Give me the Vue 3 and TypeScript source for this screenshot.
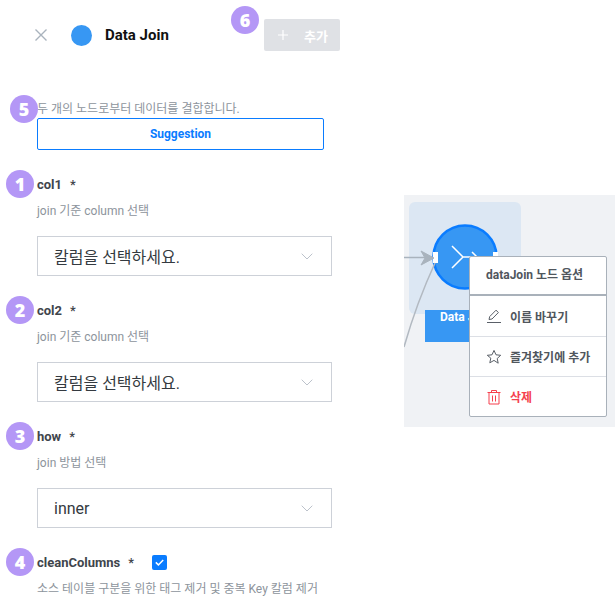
<script setup lang="ts">
interface Field {
  id: number;
  name: string;
  help: string;
  value: string;
}

const fields: Field[] = [
  { id: 1, name: "col1", help: "join 기준 column 선택", value: "칼럼을 선택하세요." },
  { id: 2, name: "col2", help: "join 기준 column 선택", value: "칼럼을 선택하세요." },
  { id: 3, name: "how", help: "join 방법 선택", value: "inner" },
];
</script>

<template>
  <div class="page">
    <section class="form">
      <header class="head">
        <svg class="close" width="12" height="12" viewBox="0 0 12 12" aria-hidden="true">
          <path d="M.5.5l11 11M11.500.5l-11 11" fill="none" stroke="#a9b3bd" stroke-width="1.4" />
        </svg>
        <span class="dot"></span>
        <h1 class="title">Data Join</h1>
        <div class="add-wrap">
          <span class="badge badge--six">6</span>
          <button class="add" type="button">
            <svg width="10" height="10" viewBox="0 0 10 10" aria-hidden="true">
              <path d="M5 0v10M0 5h10" stroke="#fff" stroke-width="1.2" />
            </svg>
            <span>추가</span>
          </button>
        </div>
      </header>

      <div class="intro">
        <span class="badge badge--five">5</span>
        <p class="intro-text">두 개의 노드로부터 데이터를 결합합니다.</p>
        <button class="suggest" type="button">Suggestion</button>
      </div>

      <div v-for="field in fields" :key="field.id" class="field">
        <div class="label">
          <span class="badge badge--field">{{ field.id }}</span>
          <span class="name">{{ field.name }}</span>
          <span class="req">*</span>
        </div>
        <p class="help">{{ field.help }}</p>
        <div class="select">
          <span>{{ field.value }}</span>
          <svg width="12" height="7" viewBox="0 0 12 7" aria-hidden="true">
            <path d="M.7.7L6 6l5.3-5.3" fill="none" stroke="#bcc2cb" stroke-width="1" />
          </svg>
        </div>
      </div>

      <div class="field field--check">
        <div class="label">
          <span class="badge badge--field">4</span>
          <span class="name">cleanColumns</span>
          <span class="req">*</span>
          <span class="check">
            <svg width="9" height="7" viewBox="0 0 9 7" aria-hidden="true">
              <path d="M.8 3.4l2.600 2.500L8.200.9" fill="none" stroke="#fff" stroke-width="1.5" />
            </svg>
          </span>
        </div>
        <p class="help help--wide">소스 테이블 구분을 위한 태그 제거 및 중복 Key 칼럼 제거</p>
      </div>
    </section>

    <aside class="canvas">
      <div class="node-bg"></div>
      <div class="node-label">Data Join</div>
      <svg class="wires" width="211" height="232" viewBox="0 0 211 232" aria-hidden="true">
        <circle cx="61" cy="62" r="31.500" fill="#3797f3" stroke="#0a7cff" stroke-width="2.500" />
        <path d="M48 51L59 62L48 73M59 62H76M68 57L74 63" fill="none" stroke="#fff" stroke-width="1.500" />
        <rect x="29" y="57" width="5" height="11" fill="#fff" />
        <rect x="89" y="57" width="5" height="11" fill="#fff" />
        <path d="M0 62.500H28" fill="none" stroke="#a9b3bd" stroke-width="1.500" />
        <path d="M0 152C8 124 19 94 31 68" fill="none" stroke="#b2b9c1" stroke-width="1.500" />
        <path d="M17 56L30 63L17 70L21 63Z" fill="#a9b3bd" stroke="#a9b3bd" stroke-width="1" />
      </svg>
      <div class="menu">
        <div class="menu-title">dataJoin 노드 옵션</div>
        <div class="menu-item">
          <svg width="16" height="16" viewBox="0 0 16 16" aria-hidden="true">
            <path d="M3 11.500L3.700 8.600L10 2.200L12.400 4.500L6 11L3 11.500Z" fill="none" stroke="#5a6068" />
            <path d="M1 14.500H15" stroke="#5a6068" />
          </svg>
          <span>이름 바꾸기</span>
        </div>
        <div class="menu-item">
          <svg width="16" height="16" viewBox="0 0 16 16" aria-hidden="true">
            <path d="M8 1.400l2 4.400 4.700.5-3.500 3.200 1 4.700L8 11.400l-4.200 2.400 1-4.700L1.300 6.300 6 5.800z" fill="none" stroke="#5a6068" />
          </svg>
          <span>즐겨찾기에 추가</span>
        </div>
        <div class="menu-item menu-item--danger">
          <svg width="16" height="16" viewBox="0 0 16 16" aria-hidden="true">
            <path d="M1.500 3.500H14.500M5.500 3V1.500H10.500V3M3 3.500V15H13V3.500M6.500 6.500V12.500M9.500 6.500V12.500" fill="none" stroke="#f5414e" />
          </svg>
          <span>삭제</span>
        </div>
      </div>
    </aside>
  </div>
</template>

<style scoped>
.page {
  position: relative;
  display: flex;
  width: 615px;
  height: 609px;
  overflow: hidden;
  background: #fff;
  font-family: Roboto, "Noto Sans CJK KR", sans-serif;
}

.form {
  flex: 0 0 auto;
  width: 295px;
  margin-left: 37px;
}

.head {
  display: flex;
  align-items: center;
  height: 32px;
  margin-top: 19px;
}

.close {
  margin-left: -2px;
}

.dot {
  width: 21px;
  height: 21px;
  margin-left: 24px;
  border-radius: 50%;
  background: #3797f3;
}

.title {
  margin: 0 0 0 13px;
  font-size: 15px;
  font-weight: 700;
  color: #111;
}

.add-wrap {
  position: relative;
  margin-left: auto;
  margin-right: -8px;
}

.add {
  display: flex;
  align-items: center;
  gap: 16px;
  width: 76px;
  height: 32px;
  padding: 0 0 0 14px;
  border: 0;
  border-radius: 2px;
  background: #dfe1e5;
  color: #fff;
  font: 700 13px Roboto, "Noto Sans CJK KR", sans-serif;
}

.badge {
  position: absolute;
  display: flex;
  align-items: center;
  justify-content: center;
  width: 28px;
  height: 28px;
  border-radius: 50%;
  background: #b497f6;
  color: #fff;
  font-family: "Open Sans", sans-serif;
  font-size: 18px;
  font-weight: 800;
}

.badge--six {
  top: -13px;
  left: -33px;
}

.badge--five {
  top: -5px;
  left: -27px;
}

.badge--field {
  top: -7px;
  left: -31px;
}

.intro {
  position: relative;
  margin-top: 49px;
}

.intro-text {
  margin: 0;
  height: 18px;
  font-size: 12px;
  line-height: 18px;
  color: #8d949c;
}

.suggest {
  display: block;
  width: 287px;
  height: 32px;
  padding: 0;
  border: 1px solid #0a7cff;
  border-radius: 2px;
  background: #fff;
  color: #0a7cff;
  font: 700 12px Roboto, sans-serif;
}

.field {
  height: 126px;
}

.intro + .field {
  margin-top: 27px;
}

.label {
  position: relative;
  display: flex;
  align-items: center;
  height: 14px;
  font-size: 13px;
  font-weight: 700;
  color: #3f454c;
}

.req {
  margin-left: 8px;
  font-weight: 500;
}

.help {
  margin: 13px 0 0;
  height: 15px;
  font-size: 12px;
  line-height: 15px;
  color: #8d949c;
}

.help--wide {
  width: 300px;
  white-space: nowrap;
}

.select {
  display: flex;
  align-items: center;
  justify-content: space-between;
  box-sizing: border-box;
  height: 40px;
  margin-top: 17px;
  padding: 0 18px 0 16px;
  border: 1px solid #cdd1d8;
  font-size: 16px;
  color: #343a40;
}

.check {
  display: flex;
  align-items: center;
  justify-content: center;
  width: 15px;
  height: 15px;
  margin-left: 18px;
  border-radius: 2px;
  background: #0a7cff;
}

.canvas {
  position: absolute;
  top: 195px;
  left: 404px;
  width: 211px;
  height: 232px;
  background: #f0f2f5;
}

.node-bg {
  position: absolute;
  top: 7px;
  left: 5px;
  width: 112px;
  height: 112px;
  border-radius: 6px;
  background: #dce7f3;
}

.node-label {
  position: absolute;
  top: 115px;
  left: 21px;
  box-sizing: border-box;
  width: 90px;
  height: 32px;
  padding-left: 15px;
  background: #3797f3;
  color: #fff;
  font-size: 12px;
  font-weight: 700;
  line-height: 14px;
  white-space: nowrap;
}

.wires {
  position: absolute;
  top: 0;
  left: 0;
}

.menu {
  position: absolute;
  top: 61px;
  left: 65px;
  box-sizing: border-box;
  width: 138px;
  height: 161px;
  border: 1px solid #a9b1ba;
  border-radius: 2px;
  background: #fff;
}

.menu-title {
  box-sizing: border-box;
  height: 39px;
  padding-left: 16px;
  border-bottom: 2px solid #a9b1ba;
  font-size: 12px;
  font-weight: 700;
  line-height: 36px;
  color: #50565d;
}

.menu-item {
  display: flex;
  align-items: center;
  gap: 8px;
  height: 40px;
  padding-left: 16px;
  border-top: 1px solid #dcdfe5;
  box-sizing: border-box;
  font-size: 12px;
  font-weight: 700;
  color: #50565d;
}

.menu-title + .menu-item {
  border-top: 0;
}

.menu-item--danger {
  color: #f5414e;
}
</style>
